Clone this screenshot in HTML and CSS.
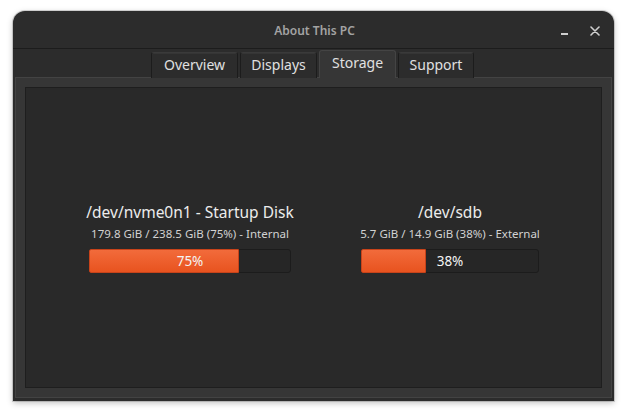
FILE: index.html
```html
<!DOCTYPE html>
<html>
<head>
<meta charset="utf-8">
<link rel="stylesheet" href="styles.css">
</head>
<body>
<div class="window">
  <div class="titlebar">
    <span class="title">About This PC</span>
    <div class="controls">
      <span class="btn-min"></span>
      <svg class="btn-close" width="10" height="10" viewBox="0 0 10 10"><path d="M1 1L9 9M9 1L1 9" stroke="#cfcfcf" stroke-width="1.6" stroke-linecap="round"/></svg>
    </div>
  </div>
  <div class="body">
    <div class="tabs">
      <div class="tab t1">Overview</div>
      <div class="tab t2">Displays</div>
      <div class="tab active t3">Storage</div>
      <div class="tab t4">Support</div>
    </div>
    <div class="frame">
      <div class="panel">
        <div class="disks">
          <div class="disk disk-a">
            <div class="name">/dev/nvme0n1 - Startup Disk</div>
            <div class="info">179.8 GiB / 238.5 GiB (75%) - Internal</div>
            <div class="bar"><div class="fill" style="width:75%"></div><span class="pct">75%</span></div>
          </div>
          <div class="disk disk-b">
            <div class="name">/dev/sdb</div>
            <div class="info">5.7 GiB / 14.9 GiB (38%) - External</div>
            <div class="bar"><div class="fill" style="width:37%"></div><span class="pct">38%</span></div>
          </div>
        </div>
      </div>
    </div>
  </div>
</div>
</body>
</html>
```
FILE: styles.css
```css
* { box-sizing: border-box; }
html, body { margin: 0; padding: 0; background: #ffffff; }
body {
  font-family: "Noto Sans", "Open Sans", sans-serif;
  width: 628px; height: 416px; overflow: hidden;
}
.window {
  margin: 11px 0 0 13px;
  width: 601px;
  height: 390px;
  background: #2c2c2c;
  border-radius: 12px 12px 0 0;
  box-shadow: 0 2px 6px rgba(0,0,0,0.25), 0 0 0 1px rgba(0,0,0,0.15);
  display: flex;
  flex-direction: column;
}
.titlebar {
  height: 38px;
  flex: none;
  border-bottom: 1px solid #1c1c1c;
  display: flex;
  align-items: center;
  justify-content: center;
  position: relative;
}
.title {
  color: #a3a3a3;
  font-size: 12px;
  font-weight: 600;
  margin-top: 1px;
  margin-left: 2px;
}
.controls {
  position: absolute;
  right: 14px;
  top: 14px;
  display: flex;
  align-items: center;
  gap: 22px;
}
.btn-min {
  display: block;
  width: 7px;
  height: 1.5px;
  background: #cfcfcf;
  margin-top: 7px;
}
.btn-close { display: block; margin-top: 1px; }
.body {
  flex: 1;
  display: flex;
  flex-direction: column;
  padding: 1px 2px 3px 2px;
}
.tabs {
  display: flex;
  justify-content: center;
  align-items: flex-end;
  gap: 2px;
  height: 28px;
  margin-bottom: -1px;
  padding-right: 2px;
  position: relative;
  z-index: 1;
}
.tab {
  height: 26px;
  background: #2c2c2c;
  border: 1px solid #1c1c1c;
  border-bottom: none;
  border-top-color: #3a3a3a;
  border-radius: 3px 3px 0 0;
  color: #e0e0e0;
  font-size: 14px;
  display: flex;
  align-items: center;
  justify-content: center;
  padding-bottom: 3px;
  box-shadow: inset 0 1px 0 #353535;
}
.t1 { width: 87px; }
.t2 { width: 77px; }
.t3 { width: 77px; }
.t4 { width: 76px; }
.tab.active {
  height: 28px;
  background: #363636;
  border-color: #444444;
  padding-bottom: 5px;
  box-shadow: none;
}
.frame {
  flex: 1;
  background: #363636;
  border: 1px solid #434343;
  padding: 9px;
  display: flex;
}
.panel {
  flex: 1;
  background: #292929;
  border: 1px solid #1e1e1e;
  display: flex;
  align-items: center;
  justify-content: center;
  padding-left: 1px;
}
.disks {
  display: flex;
  gap: 70px;
}
.disk {
  display: flex;
  flex-direction: column;
  align-items: center;
}
.disk-a { width: 202px; }
.disk-b { width: 178px; }
.name {
  color: #ececec;
  font-size: 15.5px;
  line-height: 20px;
  white-space: nowrap;
}
.info {
  color: #d2d2d2;
  font-size: 11.5px;
  line-height: 14px;
  margin-top: 5px;
  white-space: nowrap;
}
.bar {
  margin-top: 8px;
  width: 100%;
  height: 24px;
  background: #262626;
  border: 1px solid #1c1c1c;
  border-radius: 3px;
  position: relative;
  display: flex;
  align-items: center;
  justify-content: center;
}
.fill {
  position: absolute;
  left: -1px; top: -1px; bottom: -1px;
  background: linear-gradient(#f26b3b, #e8531f);
  border: 1px solid #c7431a;
  border-radius: 2px 0 0 2px;
}
.pct {
  position: relative;
  color: #f4f4f4;
  font-size: 13.5px;
}
```
